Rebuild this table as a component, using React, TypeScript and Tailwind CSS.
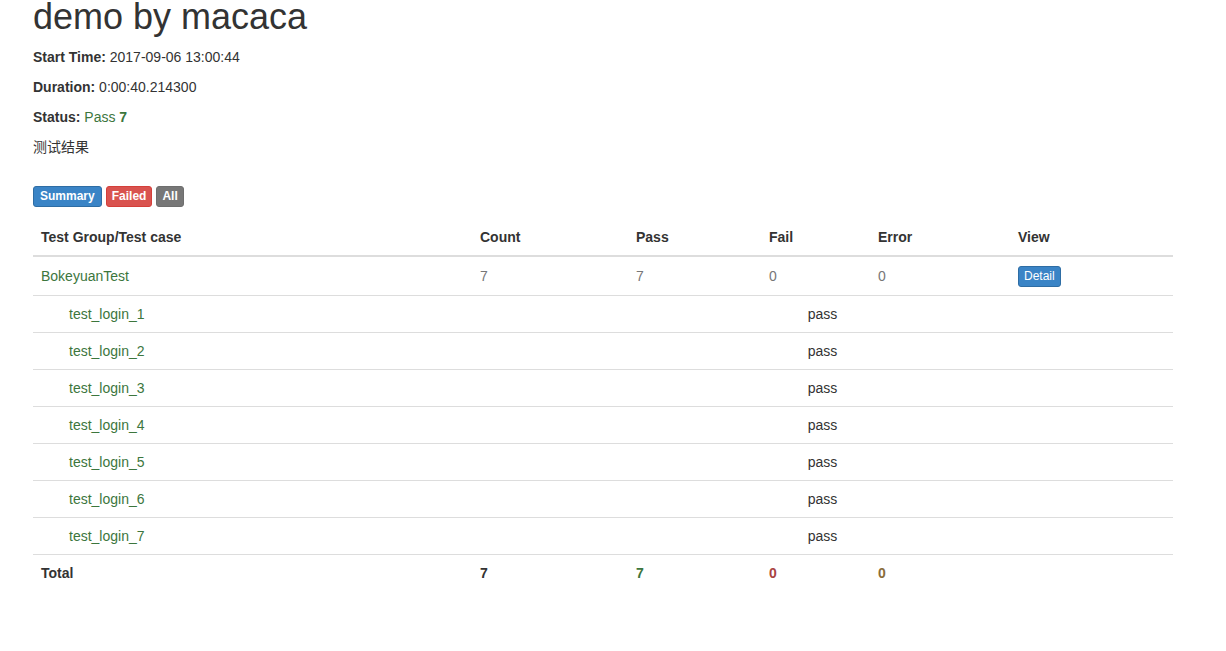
const cases = [1, 2, 3, 4, 5, 6, 7].map((n) => `test_login_${n}`);

export default function App() {
  return (
    <div
      className="min-h-[651px] bg-white pl-[33px] text-[14px] leading-[20px] text-[#333]"
      style={{ fontFamily: '"Liberation Sans", Arial, "Noto Sans CJK SC", sans-serif' }}
    >
      <h1 className="-mt-[3px] mb-[10px] text-[36px] leading-[1.1] font-normal">demo by macaca</h1>

      <p className="mb-[10px]">
        <strong>Start Time:</strong> 2017-09-06 13:00:44
      </p>
      <p className="mb-[10px]">
        <strong>Duration:</strong> 0:00:40.214300
      </p>
      <p className="mb-[10px]">
        <strong>Status:</strong> <span className="text-[#3c763d]">Pass <strong>7</strong></span>
      </p>
      <p className="mb-[29px]">测试结果</p>

      {/* filter buttons */}
      <div className="flex gap-[4px]">
        <span className="rounded-[3px] border border-[#2e6da4] bg-[#3a84c6] px-[6px] text-[12px] leading-[19px] font-bold text-white">
          Summary
        </span>
        <span className="rounded-[3px] border border-[#d43f3a] bg-[#d9534f] px-[5px] text-[12px] leading-[19px] font-bold text-white">
          Failed
        </span>
        <span className="rounded-[3px] border border-[#6e6e6e] bg-[#777] px-[5px] text-[12px] leading-[19px] font-bold text-white">
          All
        </span>
      </div>

      <table className="mt-[12px] w-[1140px] table-fixed border-collapse">
        <colgroup>
          <col className="w-[439px]" />
          <col className="w-[156px]" />
          <col className="w-[133px]" />
          <col className="w-[109px]" />
          <col className="w-[140px]" />
          <col className="w-[163px]" />
        </colgroup>
        <thead>
          <tr className="border-b-2 border-[#ddd] text-left font-bold">
            <th className="p-[8px]">Test Group/Test case</th>
            <th className="p-[8px]">Count</th>
            <th className="p-[8px]">Pass</th>
            <th className="p-[8px]">Fail</th>
            <th className="p-[8px]">Error</th>
            <th className="p-[8px]">View</th>
          </tr>
        </thead>
        <tbody>
          <tr className="border-t border-[#ddd] text-[#777]">
            <td className="p-[8px] text-[#3c763d]">BokeyuanTest</td>
            <td className="p-[8px]">7</td>
            <td className="p-[8px]">7</td>
            <td className="p-[8px]">0</td>
            <td className="p-[8px]">0</td>
            <td className="p-[8px]">
              <span className="inline-block rounded-[3px] border border-[#2e6da4] bg-[#3a84c6] px-[5px] text-[12px] leading-[19px] text-white">
                Detail
              </span>
            </td>
          </tr>
          {cases.map((c) => (
            <tr key={c} className="border-t border-[#ddd]">
              <td className="py-[8px] pr-[8px] pl-[36px] text-[#3c763d]">{c}</td>
              <td colSpan={5} className="p-[8px] text-center">
                pass
              </td>
            </tr>
          ))}
          <tr className="border-t border-[#ddd] font-bold">
            <td className="p-[8px]">Total</td>
            <td className="p-[8px]">7</td>
            <td className="p-[8px] text-[#3c763d]">7</td>
            <td className="p-[8px] text-[#a94442]">0</td>
            <td className="p-[8px] text-[#8a6d3b]">0</td>
            <td className="p-[8px]"></td>
          </tr>
        </tbody>
      </table>
    </div>
  );
}
